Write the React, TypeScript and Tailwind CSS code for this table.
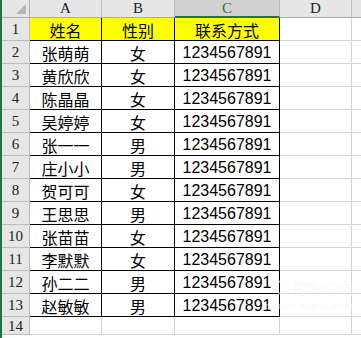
import React from 'react';

const rows: [string, string][] = [
  ['张萌萌', '女'],
  ['黄欣欣', '女'],
  ['陈晶晶', '女'],
  ['吴婷婷', '女'],
  ['张一一', '男'],
  ['庄小小', '男'],
  ['贺可可', '女'],
  ['王思思', '男'],
  ['张苗苗', '女'],
  ['李默默', '女'],
  ['孙二二', '男'],
  ['赵敏敏', '男'],
];

const cjk = "font-['Noto_Sans_CJK_SC',sans-serif]";
const num = "font-['Liberation_Sans','Noto_Sans_CJK_SC',sans-serif]";
const hdrFont = "font-['Liberation_Serif',serif]";

const RowHead: React.FC<{ n: number; h: string }> = ({ n, h }) => (
  <div className={`w-[28px] ${h} shrink-0 bg-[#e6e6e6] border-r border-b border-[#bcbcbc] flex items-center justify-center pt-[1px] text-[15px] text-[#222] ${hdrFont}`}>
    {n}
  </div>
);

const Cell: React.FC<{ w: string; edge?: boolean; fill?: boolean; font?: string; children?: React.ReactNode }> = ({ w, edge, fill, font, children }) => (
  <div
    className={`${w} h-full shrink-0 border-r border-b flex items-center justify-center pt-[2px] text-[16px] text-black ${font || cjk} ${
      edge ? 'border-black' : 'border-[#d4d4d4]'
    } ${fill ? 'bg-[#ffff00]' : 'bg-white'}`}
  >
    {children}
  </div>
);

export default function App() {
  return (
    <div className="relative w-[361px] h-[338px] overflow-hidden bg-white border-l-2 border-[#217346] flex flex-col">
      {/* column headers */}
      <div className={`flex h-[18px] shrink-0 text-[15px] text-[#222] ${hdrFont}`}>
        <div className="w-[28px] shrink-0 bg-[#e6e6e6] border-r border-b border-[#ababab] relative">
          <div className="absolute right-[3px] bottom-[3px] w-0 h-0 border-l-[10px] border-l-transparent border-b-[10px] border-b-[#b8b8b8]" />
        </div>
        <div className="w-[72px] shrink-0 bg-[#e6e6e6] border-r border-b border-r-[#bcbcbc] border-b-[#ababab] flex items-center justify-center">A</div>
        <div className="w-[73px] shrink-0 bg-[#e6e6e6] border-r border-b border-r-[#bcbcbc] border-b-[#ababab] flex items-center justify-center">B</div>
        <div className="w-[105px] shrink-0 bg-[#d2d2d2] border-r border-b-2 border-r-[#bcbcbc] border-b-[#217346] flex items-center justify-center pt-[1px] text-[#217346]">C</div>
        <div className="w-[72px] shrink-0 bg-[#e6e6e6] border-r border-b border-r-[#bcbcbc] border-b-[#ababab] flex items-center justify-center">D</div>
        <div className="flex-1 bg-[#e6e6e6] border-b border-[#ababab]" />
      </div>

      {/* row 1: titles */}
      <div className="flex h-[23px] shrink-0">
        <RowHead n={1} h="h-[23px]" />
        <Cell w="w-[72px]" edge fill>姓名</Cell>
        <Cell w="w-[73px]" edge fill>性别</Cell>
        <Cell w="w-[105px]" edge fill>联系方式</Cell>
        <Cell w="w-[72px]" />
        <div className="flex-1 border-b border-[#d4d4d4]" />
      </div>

      {rows.map(([name, sex], i) => (
        <div key={i} className="flex h-[23px] shrink-0">
          <RowHead n={i + 2} h="h-[23px]" />
          <Cell w="w-[72px]" edge>{name}</Cell>
          <Cell w="w-[73px]" edge>{sex}</Cell>
          <Cell w="w-[105px]" edge font={num}>1234567891</Cell>
          <Cell w="w-[72px]" />
          <div className="flex-1 border-b border-[#d4d4d4]" />
        </div>
      ))}

      {/* row 14 */}
      <div className="flex h-[18px] shrink-0">
        <RowHead n={14} h="h-[18px]" />
        <Cell w="w-[72px]" />
        <Cell w="w-[73px]" />
        <Cell w="w-[105px]" />
        <Cell w="w-[72px]" />
        <div className="flex-1 border-b border-[#d4d4d4]" />
      </div>

      {/* sogou watermark */}
      <div className="absolute left-[262px] top-[280px] flex flex-col items-end pointer-events-none opacity-50">
        <div className={`flex items-center gap-[3px] text-[15px] leading-none text-white ${cjk} [text-shadow:0_0_1px_#d8d8d8]`}>
          <div className="w-[15px] h-[15px] rounded-full border-2 border-white shadow-[0_0_1px_#d8d8d8]" />
          搜狗指南
        </div>
        <div className={`mt-[7px] text-[9px] leading-none tracking-[1px] text-white ${num} [text-shadow:0_0_1px_#d8d8d8]`}>zhinan.sogou.com</div>
      </div>
    </div>
  );
}
